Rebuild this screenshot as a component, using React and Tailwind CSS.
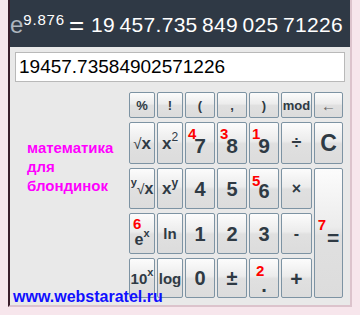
import React from "react";

const btn =
  "relative flex items-center justify-center border border-[#7d93a3] rounded-[2px] bg-[linear-gradient(to_bottom,#fcfcfc_0%,#ececec_45%,#e0e0e0_52%,#dcdcdc_100%)] text-[#2f3a44] font-bold leading-none";

function Red({ children, cls = "left-[2px] top-[3px]" }) {
  return (
    <span className={`absolute ${cls} text-[15px] font-bold text-[#ff0000] leading-none`}>
      {children}
    </span>
  );
}

export default function App() {
  return (
    <div
      className="relative w-[360px] h-[315px] bg-[#f7e6ec] overflow-hidden"
      style={{ fontFamily: '"Liberation Sans", Arial, sans-serif' }}
    >
      <div className="ml-[8px] w-[344px] h-[307px] border-l-2 border-l-[#3b1d2b] border-r-2 border-r-[#dcc3cc] border-b-2 border-b-[#dcc3cc] bg-[#e9e9e9] flex flex-col">
        {/* header */}
        <div className="h-[47px] bg-[#2f3945] flex items-center pl-[0px] pt-[2px] whitespace-nowrap overflow-hidden">
          <span className="text-[24px] text-[#aeb6bf] leading-none">e</span>
          <span className="text-[15px] text-white leading-none self-start mt-[10px] tracking-[0.8px]">9.876</span>
          <span className="text-[26px] text-white leading-none ml-[4px] mr-[7px]">=</span>
          <span className="text-[21px] text-white leading-none tracking-[0.3px]">
            19{"\u2009"}457.735{"\u2009"}849{"\u2009"}025{"\u2009"}71226
          </span>
        </div>

        {/* input */}
        <div className="mx-[5px] mt-[5px] h-[30px] border border-[#b9b9b9] bg-white flex items-center pl-[3px] text-[19px] text-black">
          19457.73584902571226
        </div>

        {/* body */}
        <div className="flex mt-[10px]">
          <div className="w-[119px] pl-[17px] pt-[46px] text-[15px] leading-[19px] font-bold text-[#ff00ff]">
            <div>математика</div>
            <div>для</div>
            <div>блондинок</div>
          </div>

          <div className="grid grid-cols-[26px_26px_30px_30px_30px_31px_29px] grid-rows-[26px_42px_41px_41px_40px] gap-x-[2px] gap-y-[4px]">
            {/* row 1 */}
            <div className={`${btn} text-[13px]`}>%</div>
            <div className={`${btn} text-[13px]`}>!</div>
            <div className={`${btn} text-[13px]`}>(</div>
            <div className={`${btn} text-[13px]`}>,</div>
            <div className={`${btn} text-[13px]`}>)</div>
            <div className={`${btn} text-[13px]`}>mod</div>
            <div className={`${btn} text-[15px] font-normal text-[#666]`}>←</div>

            {/* row 2 */}
            <div className={`${btn} text-[17px]`}>
              <span className="font-normal text-[15px]">√</span>x
            </div>
            <div className={`${btn} text-[17px]`}>
              x<sup className="text-[12px] font-normal -top-[6px] relative">2</sup>
            </div>
            <div className={`${btn} text-[21px] pt-[5px]`}>
              <Red>4</Red>7
            </div>
            <div className={`${btn} text-[21px] pt-[5px]`}>
              <Red>3</Red>8
            </div>
            <div className={`${btn} text-[21px] pt-[5px]`}>
              <Red>1</Red>9
            </div>
            <div className={`${btn} text-[18px]`}>÷</div>
            <div className={`${btn} text-[23px]`}>C</div>

            {/* row 3 */}
            <div className={`${btn} text-[16px]`}>
              <span className="text-[11px] relative -top-[6px]">y</span>
              <span className="font-normal text-[14px]">√</span>x
            </div>
            <div className={`${btn} text-[17px]`}>
              x<span className="text-[12px] relative -top-[6px]">y</span>
            </div>
            <div className={`${btn} text-[20px]`}>4</div>
            <div className={`${btn} text-[20px]`}>5</div>
            <div className={`${btn} text-[20px] pt-[5px]`}>
              <Red cls="left-[2px] top-[4px]">5</Red>6
            </div>
            <div className={`${btn} text-[16px]`}>×</div>
            <div className={`${btn} row-span-3 flex-col`}>
              <div className="flex items-start">
                <span className="text-[15px] font-bold text-[#ff0000] leading-none relative -top-[2px] mr-[1px]">7</span>
                <span className="text-[21px] leading-none pt-[8px]">=</span>
              </div>
            </div>

            {/* row 4 */}
            <div className={`${btn} text-[16px] pt-[12px]`}>
              <Red cls="left-[3px] top-[2px]">6</Red>e
              <span className="text-[11px] relative -top-[6px]">x</span>
            </div>
            <div className={`${btn} text-[15px]`}>ln</div>
            <div className={`${btn} text-[20px]`}>1</div>
            <div className={`${btn} text-[20px]`}>2</div>
            <div className={`${btn} text-[20px]`}>3</div>
            <div className={`${btn} text-[16px]`}>-</div>

            {/* row 5 */}
            <div className={`${btn} text-[15px]`}>
              10<span className="text-[11px] relative -top-[6px]">x</span>
            </div>
            <div className={`${btn} text-[15px]`}>log</div>
            <div className={`${btn} text-[20px]`}>0</div>
            <div className={`${btn} text-[20px]`}>±</div>
            <div className={`${btn} text-[20px] pt-[14px]`}>
              <Red cls="left-[6px] top-[4px]">2</Red>.
            </div>
            <div className={`${btn} text-[21px]`}>+</div>
          </div>
        </div>
      </div>

      <div className="absolute left-[13px] top-[288px] text-[16px] font-bold text-[#1010ff] leading-[18px] whitespace-nowrap">
        www.webstaratel.ru
      </div>
    </div>
  );
}
